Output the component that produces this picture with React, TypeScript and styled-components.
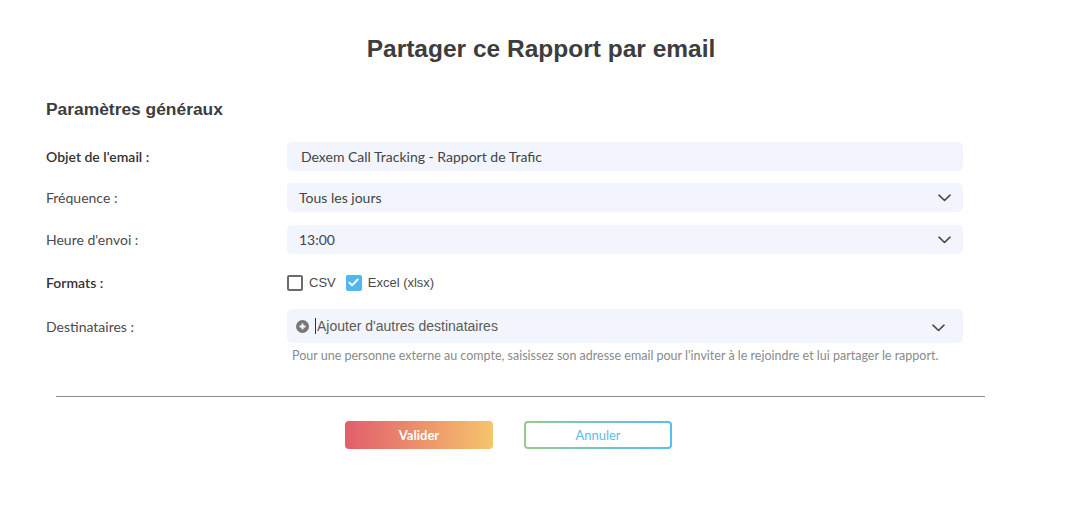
import React, { useState } from 'react';
import styled, { createGlobalStyle } from 'styled-components';

const GlobalStyle = createGlobalStyle`
  html, body {
    margin: 0;
    padding: 0;
    background: #ffffff;
  }
  body {
    font-family: 'Lato', 'Open Sans', sans-serif;
    color: #444444;
  }
  * {
    box-sizing: border-box;
  }
`;

const Page = styled.div`
  width: 1090px;
  height: 517px;
  padding-top: 34px;
`;

const Title = styled.h1`
  margin: 0;
  text-align: center;
  padding-right: 8px;
  font-family: 'Liberation Sans', Arial, sans-serif;
  font-size: 24.5px;
  font-weight: 700;
  line-height: 30px;
  color: #3d3d3d;
`;

const Section = styled.div`
  padding: 0 127px 0 46px;
`;

const SectionTitle = styled.h2`
  margin: 34px 0 22px;
  font-family: 'Liberation Sans', Arial, sans-serif;
  font-size: 17.4px;
  font-weight: 700;
  line-height: 22px;
  color: #3d3d3d;
`;

const Rows = styled.div`
  display: flex;
  flex-direction: column;
  gap: 12px;
`;

const Row = styled.div<{ $top?: boolean; $shift?: number }>`
  display: grid;
  grid-template-columns: 241px 1fr;
  align-items: ${p => (p.$top ? 'start' : 'center')};
  margin-top: ${p => p.$shift ?? 0}px;
`;

const Label = styled.label<{ $strong?: boolean }>`
  font-size: 14px;
  font-weight: ${p => (p.$strong ? 600 : 400)};
  color: ${p => (p.$strong ? '#333333' : '#4a4a4a')};
  line-height: 20px;
`;

const Field = styled.div<{ $tall?: boolean; $pad?: number }>`
  display: flex;
  align-items: center;
  justify-content: space-between;
  height: ${p => (p.$tall ? 34 : 29)}px;
  padding: 0 12px 0 ${p => p.$pad ?? 12}px;
  background: #f2f5fd;
  border-radius: 5px;
  font-size: 14px;
  color: #444444;
`;

const FieldLabel = styled.div`
  padding-top: 7px;
`;

const Chevron = () => (
  <svg width="13" height="8" viewBox="0 0 13 8" fill="none">
    <path d="M1 1.2L6.5 6.5L12 1.2" stroke="#4a4a4a" strokeWidth="1.6" strokeLinecap="round" strokeLinejoin="round" />
  </svg>
);

const Checks = styled.div`
  display: flex;
  align-items: center;
  gap: 10px;
  height: 29px;
`;

const Check = styled.label`
  display: flex;
  align-items: center;
  gap: 6px;
  font-family: 'Liberation Sans', Arial, sans-serif;
  font-size: 13px;
  color: #4a4a4a;
  cursor: pointer;
`;

const Box = styled.span<{ $on: boolean }>`
  display: flex;
  align-items: center;
  justify-content: center;
  width: 16px;
  height: 16px;
  border-radius: 2px;
  border: ${p => (p.$on ? 'none' : '2px solid #6b6b6b')};
  background: ${p => (p.$on ? '#4fb9ef' : '#ffffff')};
`;

const Placeholder = styled.div`
  display: flex;
  align-items: center;
  gap: 6px;
  font-family: 'Liberation Sans', Arial, sans-serif;
  font-size: 14px;
  color: #5a5a5a;
`;

const Caret = styled.span`
  display: inline-block;
  width: 1px;
  height: 16px;
  background: #333333;
  margin-right: -5px;
`;

const Help = styled.p`
  margin: 5px 0 0 5px;
  font-size: 12.5px;
  color: #8a8a8a;
  line-height: 16px;
`;

const Divider = styled.hr`
  margin: 32px 105px 0 56px;
  border: none;
  border-top: 1px solid #8c8c8c;
`;

const Actions = styled.div`
  display: flex;
  gap: 31px;
  padding-left: 345px;
  margin-top: 24px;
`;

const Primary = styled.button`
  width: 148px;
  height: 28px;
  border: none;
  border-radius: 4px;
  background: linear-gradient(90deg, #e25e6c 0%, #ee9a6c 60%, #f5c56b 100%);
  color: #ffffff;
  font-family: 'Lato', sans-serif;
  font-size: 13px;
  font-weight: 700;
  cursor: pointer;
`;

const Secondary = styled.button`
  width: 148px;
  height: 28px;
  border: 2px solid transparent;
  border-radius: 4px;
  background:
    linear-gradient(#ffffff, #ffffff) padding-box,
    linear-gradient(90deg, #94cc8a 0%, #56bff0 100%) border-box;
  color: #5bbde9;
  font-family: 'Lato', sans-serif;
  font-size: 13px;
  font-weight: 400;
  cursor: pointer;
`;

const PlusIcon = () => (
  <svg width="13" height="13" viewBox="0 0 13 13">
    <circle cx="6.5" cy="6.5" r="6.5" fill="#777777" />
    <path d="M6.5 3.5V9.5M3.5 6.5H9.5" stroke="#ffffff" strokeWidth="1.8" />
  </svg>
);

const CheckMark = () => (
  <svg width="11" height="9" viewBox="0 0 11 9" fill="none">
    <path d="M1.3 4.6L4.1 7.3L9.7 1.5" stroke="#ffffff" strokeWidth="1.9" strokeLinecap="round" strokeLinejoin="round" />
  </svg>
);

export default function App() {
  const [csv, setCsv] = useState(false);
  const [xlsx, setXlsx] = useState(true);

  return (
    <Page>
      <GlobalStyle />
      <Title>Partager ce Rapport par email</Title>
      <Section>
        <SectionTitle>Paramètres généraux</SectionTitle>
        <Rows>
          <Row>
            <Label $strong>Objet de l'email :</Label>
            <Field $pad={14}>Dexem Call Tracking - Rapport de Trafic</Field>
          </Row>
          <Row>
            <Label>Fréquence :</Label>
            <Field>
              Tous les jours
              <Chevron />
            </Field>
          </Row>
          <Row $shift={1}>
            <Label>Heure d'envoi :</Label>
            <Field>
              13:00
              <Chevron />
            </Field>
          </Row>
          <Row $shift={2}>
            <Label $strong>Formats :</Label>
            <Checks>
              <Check onClick={() => setCsv(!csv)}>
                <Box $on={csv}>{csv && <CheckMark />}</Box>
                CSV
              </Check>
              <Check onClick={() => setXlsx(!xlsx)}>
                <Box $on={xlsx}>{xlsx && <CheckMark />}</Box>
                Excel (xlsx)
              </Check>
            </Checks>
          </Row>
          <Row $top>
            <FieldLabel>
              <Label>Destinataires :</Label>
            </FieldLabel>
            <div>
              <Field $tall $pad={9}>
                <Placeholder>
                  <PlusIcon />
                  <Caret />
                  Ajouter d'autres destinataires
                </Placeholder>
                <span style={{ marginRight: 6 }}>
                  <Chevron />
                </span>
              </Field>
              <Help>
                Pour une personne externe au compte, saisissez son adresse email pour l'inviter à le rejoindre et lui
                partager le rapport.
              </Help>
            </div>
          </Row>
        </Rows>
      </Section>
      <Divider />
      <Actions>
        <Primary>Valider</Primary>
        <Secondary>Annuler</Secondary>
      </Actions>
    </Page>
  );
}
